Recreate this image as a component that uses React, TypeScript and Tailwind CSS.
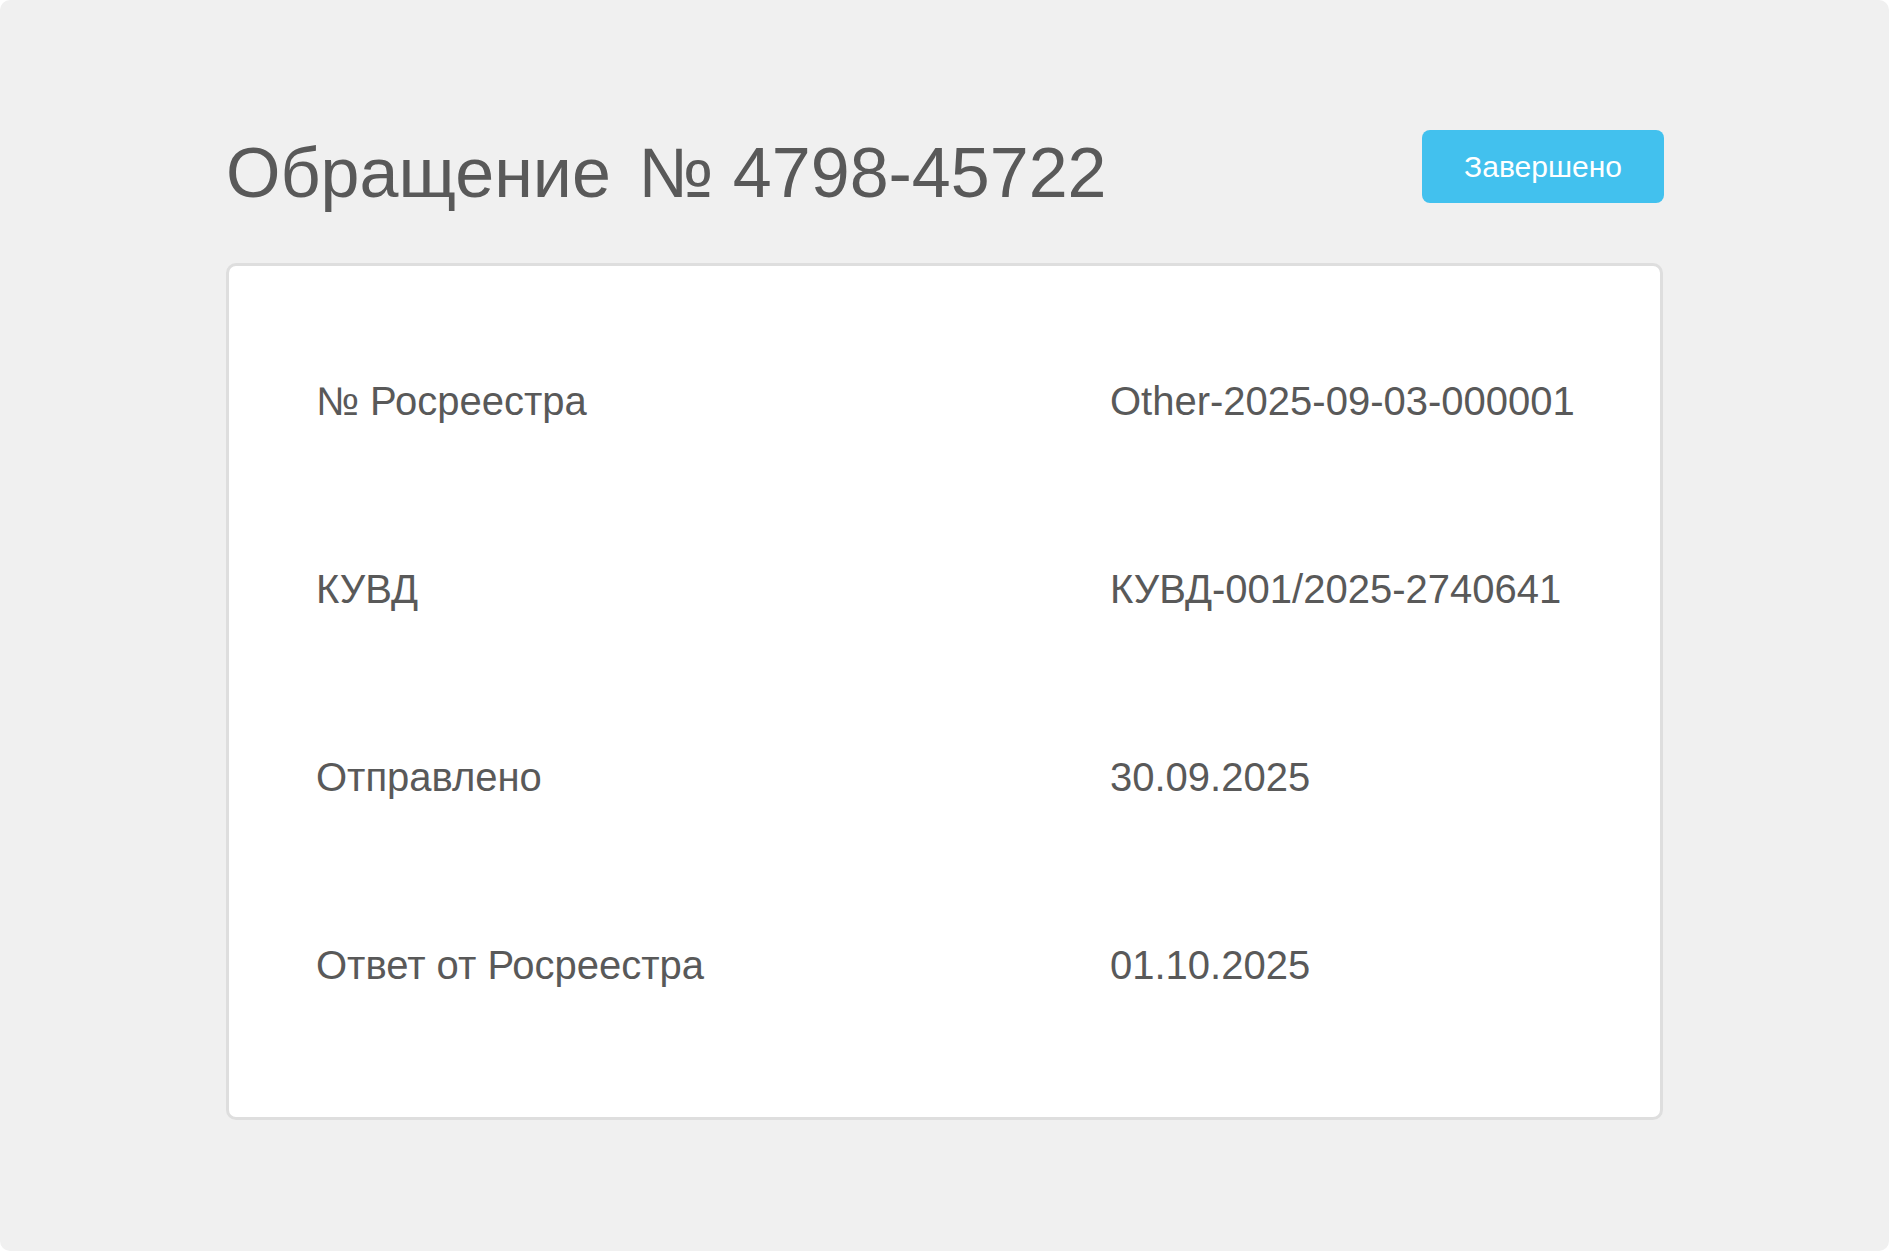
import React from "react";

const ROWS = [
  { label: "№ Росреестра", value: "Other-2025-09-03-000001" },
  { label: "КУВД", value: "КУВД-001/2025-2740641" },
  { label: "Отправлено", value: "30.09.2025" },
  { label: "Ответ от Росреестра", value: "01.10.2025" },
];

const App: React.FC = () => {
  return (
    <div className="min-h-[1251px] w-full bg-white">
      <div
        className="h-[1251px] w-full rounded-[10px] bg-[#f0f0f0] pt-[130px] text-[#595959]"
        style={{ fontFamily: '"Liberation Sans", Arial, sans-serif' }}
      >
        <div className="ml-[226px] w-[1438px]">
          {/* header */}
          <div className="flex items-start justify-between">
            <h1 className="mt-[8px] text-[70px] font-normal leading-[70px]">
              <span className="mr-[8px]">Обращение</span> № 4798-45722
            </h1>
            <button
              type="button"
              className="flex h-[73px] w-[242px] items-center justify-center rounded-[8px] bg-[#42c1ee] text-[30px] leading-none text-white"
            >
              Завершено
            </button>
          </div>

          {/* details card */}
          <div className="mt-[55px] w-[1437px] rounded-[10px] border-[3px] border-[#dedede] bg-white pb-[58px] pl-[87px] pt-[41px]">
            {ROWS.map((row) => (
              <div
                key={row.label}
                className="grid h-[188px] grid-cols-[794px_1fr] items-center text-[40px] leading-[46px]"
              >
                <span>{row.label}</span>
                <span>{row.value}</span>
              </div>
            ))}
          </div>
        </div>
      </div>
    </div>
  );
};

export default App;
